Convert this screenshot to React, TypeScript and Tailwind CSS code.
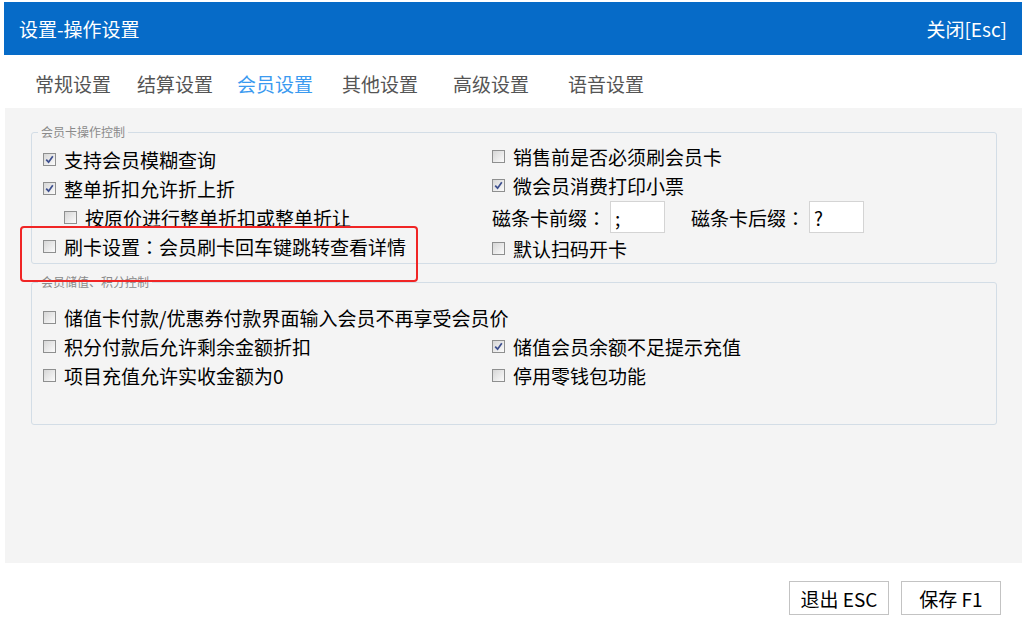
import React from "react";

const Colon = () => <span className="[font-family:'Noto_Sans_CJK_TC',sans-serif]">：</span>;

const Check = ({ checked }: { checked?: boolean }) => (
  <span className="flex h-[13px] w-[13px] shrink-0 items-center justify-center border border-[#8e8f8f] bg-[linear-gradient(135deg,#d6d6d6,#fbfbfb)]">
    {checked && (
      <svg width="9" height="9" viewBox="0 0 9 9">
        <path d="M1.2 4.6 L3.6 7.2 L7.8 1.2" fill="none" stroke="#3d4f8e" strokeWidth="1.7" />
      </svg>
    )}
  </span>
);

const Row = ({ text, checked, h = "h-[29px]" }: { text: React.ReactNode; checked?: boolean; h?: string }) => (
  <div className={`flex ${h} items-center gap-[8px]`}>
    <Check checked={checked} />
    <span className="leading-none">{text}</span>
  </div>
);

const tabs: { label: string; w: string; active?: boolean }[] = [
  { label: "常规设置", w: "w-[102px]" },
  { label: "结算设置", w: "w-[100px]" },
  { label: "会员设置", w: "w-[105px]", active: true },
  { label: "其他设置", w: "w-[111px]" },
  { label: "高级设置", w: "w-[115px]" },
  { label: "语音设置", w: "w-[100px]" },
];

export default function App() {
  return (
    <div className="relative h-[623px] w-[1025px] overflow-hidden bg-white text-black [font-family:'Noto_Sans_CJK_SC','Noto_Sans',sans-serif]">
      <div className="ml-[4px] mt-[2px] flex h-[53px] w-[1018px] items-center justify-between bg-[#066bc8] pl-[15px] pr-[15px] text-[19px] leading-none text-white">
        <span>设置-操作设置</span>
        <span>关闭[Esc]</span>
      </div>

      <div className="flex h-[53px] items-center pl-[35px] pt-[3px] text-[19px] leading-none">
        {tabs.map((t) => (
          <div key={t.label} className={`${t.w} ${t.active ? "text-[#3b9af0]" : "text-[#555555]"}`}>
            {t.label}
          </div>
        ))}
      </div>

      <div className="ml-[5px] h-[455px] w-[1017px] bg-[#f4f4f4] pl-[26px] pt-[24px] text-[19px]">
        <div className="relative flex h-[132px] w-[966px] rounded-[3px] border border-[#d3dde6] pl-[11px]">
          <span className="absolute left-[6px] top-[-8px] bg-[#f4f4f4] px-[3px] text-[12px] leading-[14px] text-[#8a8a8a]">
            会员卡操作控制
          </span>
          <div className="flex w-[449px] flex-col pt-[12px]">
            <Row text="支持会员模糊查询" checked />
            <Row text="整单折扣允许折上折" checked />
            <div className="pl-[21px]">
              <Row text="按原价进行整单折扣或整单折让" />
            </div>
            <Row text={<>刷卡设置<Colon />会员刷卡回车键跳转查看详情</>} />
          </div>
          <div className="flex flex-col pt-[9px]">
            <Row text="销售前是否必须刷会员卡" />
            <Row text="微会员消费打印小票" checked />
            <div className="flex h-[34px] items-center">
              <span className="leading-none">磁条卡前缀<Colon /></span>
              <div className="ml-[4px] flex h-[32px] w-[55px] items-center border border-[#d4d4d4] bg-white pl-[4px] leading-none">;</div>
              <span className="ml-[26px] leading-none">磁条卡后缀<Colon /></span>
              <div className="ml-[4px] flex h-[32px] w-[55px] items-center border border-[#d4d4d4] bg-white pl-[4px] leading-none">?</div>
            </div>
            <Row text="默认扫码开卡" h="h-[28px]" />
          </div>
        </div>

        <div className="relative mt-[18px] h-[143px] w-[966px] rounded-[3px] border border-[#d3dde6] pl-[11px] pt-[20px]">
          <span className="absolute left-[6px] top-[-8px] bg-[#f4f4f4] px-[3px] text-[12px] leading-[14px] text-[#8a8a8a]">
            会员储值、积分控制
          </span>
          <div className="grid grid-cols-[449px_1fr]">
            <div className="col-span-2">
              <Row text="储值卡付款/优惠券付款界面输入会员不再享受会员价" />
            </div>
            <Row text="积分付款后允许剩余金额折扣" />
            <Row text="储值会员余额不足提示充值" checked />
            <Row text="项目充值允许实收金额为0" />
            <Row text="停用零钱包功能" />
          </div>
        </div>
      </div>

      <div className="flex justify-end gap-[12px] pr-[24px] pt-[18px] text-[19px]">
        <button className="flex h-[34px] w-[100px] items-center justify-center border border-[#c3c3c3] bg-white leading-none">
          退出 ESC
        </button>
        <button className="flex h-[34px] w-[100px] items-center justify-center border border-[#c3c3c3] bg-white leading-none">
          保存 F1
        </button>
      </div>

      <div className="pointer-events-none absolute left-[20px] top-[226px] h-[56px] w-[398px] rounded-[4px] border-2 border-[#f02525]" />
    </div>
  );
}
